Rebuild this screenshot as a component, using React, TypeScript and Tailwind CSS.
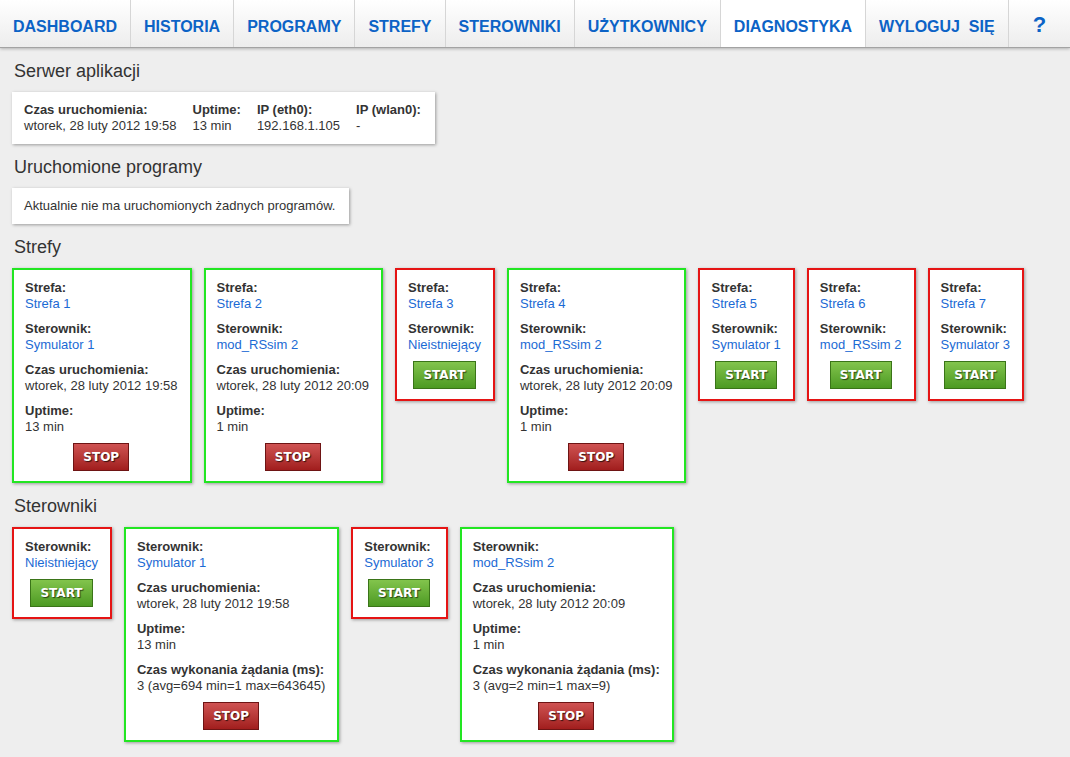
import React from "react";

type Field = { label: string; value: string; link?: boolean };

type CardProps = {
  fields: Field[];
  running: boolean;
};

const tabs = [
  "DASHBOARD",
  "HISTORIA",
  "PROGRAMY",
  "STREFY",
  "STEROWNIKI",
  "UŻYTKOWNICY",
  "DIAGNOSTYKA",
  "WYLOGUJ\u00a0 SIĘ",
];

const start = "wtorek, 28 luty 2012 19:58";
const start2 = "wtorek, 28 luty 2012 20:09";

const zones: CardProps[] = [
  {
    running: true,
    fields: [
      { label: "Strefa:", value: "Strefa 1", link: true },
      { label: "Sterownik:", value: "Symulator 1", link: true },
      { label: "Czas uruchomienia:", value: start },
      { label: "Uptime:", value: "13 min" },
    ],
  },
  {
    running: true,
    fields: [
      { label: "Strefa:", value: "Strefa 2", link: true },
      { label: "Sterownik:", value: "mod_RSsim 2", link: true },
      { label: "Czas uruchomienia:", value: start2 },
      { label: "Uptime:", value: "1 min" },
    ],
  },
  {
    running: false,
    fields: [
      { label: "Strefa:", value: "Strefa 3", link: true },
      { label: "Sterownik:", value: "Nieistniejący", link: true },
    ],
  },
  {
    running: true,
    fields: [
      { label: "Strefa:", value: "Strefa 4", link: true },
      { label: "Sterownik:", value: "mod_RSsim 2", link: true },
      { label: "Czas uruchomienia:", value: start2 },
      { label: "Uptime:", value: "1 min" },
    ],
  },
  {
    running: false,
    fields: [
      { label: "Strefa:", value: "Strefa 5", link: true },
      { label: "Sterownik:", value: "Symulator 1", link: true },
    ],
  },
  {
    running: false,
    fields: [
      { label: "Strefa:", value: "Strefa 6", link: true },
      { label: "Sterownik:", value: "mod_RSsim 2", link: true },
    ],
  },
  {
    running: false,
    fields: [
      { label: "Strefa:", value: "Strefa 7", link: true },
      { label: "Sterownik:", value: "Symulator 3", link: true },
    ],
  },
];

const controllers: CardProps[] = [
  {
    running: false,
    fields: [{ label: "Sterownik:", value: "Nieistniejący", link: true }],
  },
  {
    running: true,
    fields: [
      { label: "Sterownik:", value: "Symulator 1", link: true },
      { label: "Czas uruchomienia:", value: start },
      { label: "Uptime:", value: "13 min" },
      { label: "Czas wykonania żądania (ms):", value: "3 (avg=694 min=1 max=643645)" },
    ],
  },
  {
    running: false,
    fields: [{ label: "Sterownik:", value: "Symulator 3", link: true }],
  },
  {
    running: true,
    fields: [
      { label: "Sterownik:", value: "mod_RSsim 2", link: true },
      { label: "Czas uruchomienia:", value: start2 },
      { label: "Uptime:", value: "1 min" },
      { label: "Czas wykonania żądania (ms):", value: "3 (avg=2 min=1 max=9)" },
    ],
  },
];

const Heading = ({ children }: { children: any }) => (
  <h2 className="mt-3 mb-[10px] pl-[2px] text-[18px] leading-[22px] text-[#333]">{children}</h2>
);

const Button = ({ running }: { running: boolean }) => (
  <div className="mt-2 flex justify-center">
    {running ? (
      <button className="h-7 px-[9px] border border-[#6e1414] bg-gradient-to-b from-[#cf5252] to-[#a11d1d] text-white text-[12px] font-bold font-['DejaVu_Sans',sans-serif] [text-shadow:1px_1px_1px_rgba(0,0,0,0.7)]">
        STOP
      </button>
    ) : (
      <button className="h-7 px-[9px] border border-[#3a7418] bg-gradient-to-b from-[#82c44c] to-[#4c9a22] text-white text-[12px] font-bold font-['DejaVu_Sans',sans-serif] [text-shadow:1px_1px_1px_rgba(0,0,0,0.6)]">
        START
      </button>
    )}
  </div>
);

const Card = ({ fields, running }: CardProps) => (
  <div
    className={
      "bg-white border-2 pl-[11px] pr-3 pt-[10px] pb-[10px] shadow-[1px_1px_3px_rgba(0,0,0,0.35)] " +
      (running ? "border-[#22e622]" : "border-[#e51414]")
    }
  >
    <div className="flex flex-col gap-[9px]">
      {fields.map((f) => (
        <div key={f.label} className="whitespace-nowrap">
          <div className="font-bold">{f.label}</div>
          <div className={f.link ? "text-[#1b6ad4]" : ""}>{f.value}</div>
        </div>
      ))}
    </div>
    <Button running={running} />
  </div>
);

const App = () => {
  return (
    <div className="min-h-[757px] bg-[#eeeeee] font-['Liberation_Sans',Arial,sans-serif] text-[13px] leading-4 text-[#333] pb-4">
      <nav className="flex h-[48px] border-b border-[#a3a3a3] bg-gradient-to-b from-white to-[#ededed] shadow-[0_1px_3px_rgba(0,0,0,0.25)]">
        {tabs.map((t) => (
          <div
            key={t}
            className={
              "flex items-center px-[13px] pt-[6px] border-r border-[#d6d6d6] text-[16px] font-bold text-[#0c63c6] whitespace-nowrap " +
              (t === "DIAGNOSTYKA" ? "bg-white" : "")
            }
          >
            {t}
          </div>
        ))}
        <div className="flex items-center px-[24px] pt-[2px] border-r border-[#d6d6d6] text-[22px] font-bold text-[#0c63c6]">
          ?
        </div>
      </nav>

      <main className="px-3">
        <Heading>Serwer aplikacji</Heading>
        <div className="inline-flex gap-4 bg-white pl-3 pr-[14px] py-[10px] shadow-[1px_1px_3px_rgba(0,0,0,0.35)]">
          <div>
            <div className="font-bold">Czas uruchomienia:</div>
            <div>{start}</div>
          </div>
          <div>
            <div className="font-bold">Uptime:</div>
            <div>13 min</div>
          </div>
          <div>
            <div className="font-bold">IP (eth0):</div>
            <div>192.168.1.105</div>
          </div>
          <div>
            <div className="font-bold">IP (wlan0):</div>
            <div>-</div>
          </div>
        </div>

        <Heading>Uruchomione programy</Heading>
        <div className="inline-block bg-white pl-3 pr-[14px] pt-[10px] pb-[10px] shadow-[1px_1px_3px_rgba(0,0,0,0.35)]">
          Aktualnie nie ma uruchomionych żadnych programów.
        </div>

        <Heading>Strefy</Heading>
        <div className="flex items-start gap-3">
          {zones.map((z, i) => (
            <Card key={i} {...z} />
          ))}
        </div>

        <Heading>Sterowniki</Heading>
        <div className="flex items-start gap-3">
          {controllers.map((c, i) => (
            <Card key={i} {...c} />
          ))}
        </div>
      </main>
    </div>
  );
};

export default App;
